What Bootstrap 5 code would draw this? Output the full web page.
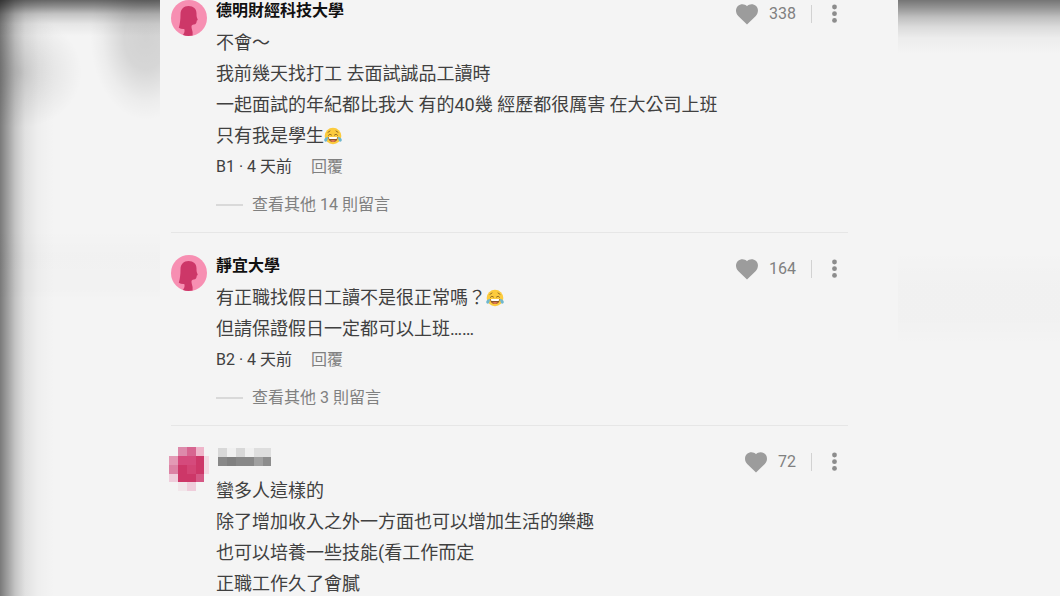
<!DOCTYPE html>
<html lang="zh-Hant">
<head>
<meta charset="utf-8">
<meta name="viewport" content="width=device-width, initial-scale=1">
<title>留言</title>
<link href="https://cdn.jsdelivr.net/npm/bootstrap@5.3.0/dist/css/bootstrap.min.css" rel="stylesheet">
<style>
  body { font-family: Roboto, "Noto Sans CJK TC", sans-serif; background: #f4f4f4; color: #404040; }
  .stage { display: grid; grid-template-columns: 160px minmax(0, 1fr) 162px; height: 100vh; overflow: hidden; }
  .shade-left {
    background:
      linear-gradient(to bottom, rgba(0,0,0,.58) 0, rgba(0,0,0,.43) 6px, rgba(0,0,0,.2) 14px, rgba(0,0,0,.06) 24px, transparent 36px),
      linear-gradient(to right, rgba(0,0,0,.5) 0, rgba(0,0,0,.36) 7px, rgba(0,0,0,.2) 15px, rgba(0,0,0,.08) 25px, rgba(0,0,0,.025) 38px, transparent 54px),
      radial-gradient(ellipse 56px 84px at 146px 36px, rgba(0,0,0,.14) 0, rgba(0,0,0,.12) 40%, rgba(0,0,0,.03) 78%, transparent 100%),
      radial-gradient(ellipse 62px 56px at 20px 72px, rgba(0,0,0,.12) 0, rgba(0,0,0,.06) 50%, transparent 100%),
      linear-gradient(to bottom, transparent 230px, rgba(0,0,0,.01) 255px, rgba(0,0,0,.008) 290px, transparent 300px),
      #f4f4f4;
  }
  .shade-right {
    background:
      linear-gradient(to bottom, rgba(0,0,0,.52) 0, rgba(0,0,0,.39) 8px, rgba(0,0,0,.22) 17px, rgba(0,0,0,.1) 27px, rgba(0,0,0,.03) 38px, transparent 54px),
      linear-gradient(to bottom, transparent 250px, rgba(0,0,0,.013) 285px, rgba(0,0,0,.01) 320px, transparent 345px),
      #f4f4f4;
  }
  /* the thread is scrolled a little past its first heading */
  .thread { margin-top: -22px; padding-left: 11px; padding-right: 50px; }
  .post { display: flex; gap: 9px; padding-top: 17px; padding-bottom: 12px; border-bottom: 1px solid #e6e6e6; }
  .face { width: 36px; height: 36px; margin-top: 5px; flex: none; overflow: visible; }
  .headline { height: 32px; padding-right: 5px; }
  .who { font-size: 16px; line-height: 31px; font-weight: 700; color: #111; margin: 0; }
  .who svg { display: block; margin-top: 5px; margin-left: 2px; }
  .words { font-size: 18px; line-height: 31px; margin: 0; }
  .emo { width: 18px; height: 18px; vertical-align: -3px; display: inline-block; }
  .meta { font-size: 16px; line-height: 31px; gap: 19px; }
  .plain { border: 0; background: none; padding: 0; color: #808080; line-height: 31px; font-size: 16px; }
  .more { gap: 9px; margin-top: 7px; }
  .more::before { content: ""; width: 27px; height: 2px; background: #d9d9d9; }
  .acts { height: 37px; }
  .like { gap: 10px; }
  .bar { width: 1px; height: 18px; background: #d2d2d2; margin-left: 15px; margin-right: 14px; }
  .dots svg, .like svg { display: block; }
</style>
</head>
<body>
<svg class="d-none" aria-hidden="true">
  <symbol id="heart" viewBox="0 0 24 22"><path fill="#9c9c9c" d="M12 21.500 3.200 13C.4 10 .3 5.600 2.900 3.100 5.600.5 9.700.7 12 3.200 14.300.7 18.400.5 21.100 3.100c2.600 2.500 2.500 6.900-.3 9.900Z"/></symbol>
  <symbol id="kebab" viewBox="0 0 17 20"><g fill="#8c8c8c"><circle cx="8.500" cy="3" r="2.400"/><circle cx="8.500" cy="9.700" r="2.400"/><circle cx="8.500" cy="16.400" r="2.400"/></g></symbol>
  <symbol id="girl" viewBox="0 0 36 36"><circle cx="18" cy="18" r="18" fill="#f78fb2"/><path fill="#cd3768" d="M9.500 14.500C9.500 9 12.800 6 17.500 6c4.900 0 8 2.800 8 7.500 0 2.300.1 3.700 1.100 5.700.3.700 0 1-.8 1.200-.2 2.600-1 3.900-3 4.100-1.700.2-2.400.9-2.300 2.500.1 1.900.8 3 1.100 5v3.500Q16.500 36.700 12 35c1.500-2.200 1.900-3.800 1.300-6-1.800.3-3.700-.1-5.500-1.300C9 24 9.500 19.500 9.500 14.500Z"/></symbol>
  <symbol id="joy" viewBox="0 0 18 18"><circle cx="9" cy="9" r="8.300" fill="#fccb3d"/><path d="M4 5.300 6 4M12 4l2 1.300M4.300 8.300Q5.800 6 7.600 8M10.400 8q1.800-2 3.300.3" fill="none" stroke="#8a6420" stroke-width=".9" stroke-linecap="round"/><path fill="#8a5528" d="M4.300 10h9.400c0 3-2 5-4.700 5s-4.700-2-4.700-5Z"/><path fill="#fff" d="M4.800 10h8.400l-.5 1.900H5.300Z"/><path fill="#e87856" d="M6 13.800Q9 12.300 12 13.800 9 16 6 13.800Z"/><path fill="#6fb7cf" d="M4 9.700C2 10 0 11.500.2 13.300c.2 1.800 2.300 1.700 3 .4.500-1.200.8-2.600.8-4ZM14 9.700c2 .3 4 1.800 3.800 3.600-.2 1.800-2.300 1.700-3 .4-.5-1.200-.8-2.600-.8-4Z"/></symbol>
</svg>
<div class="stage">
  <div class="shade-left"></div>
  <main>
    <div class="thread">
      <article class="post">
        <svg class="face" aria-hidden="true"><use href="#girl"/></svg>
        <div class="flex-grow-1">
          <div class="headline d-flex justify-content-between align-items-start">
            <h2 class="who">德明財經科技大學</h2>
            <div class="acts d-flex align-items-center">
              <button class="plain like d-flex align-items-center" aria-label="喜歡 338"><svg width="24" height="22"><use href="#heart"/></svg>338</button>
              <span class="bar"></span>
              <button class="plain dots" aria-label="更多選項"><svg width="17" height="20"><use href="#kebab"/></svg></button>
            </div>
          </div>
          <p class="words">不會～<br>我前幾天找打工 去面試誠品工讀時<br>一起面試的年紀都比我大 有的40幾 經歷都很厲害 在大公司上班<br>只有我是學生<svg class="emo" role="img" aria-label="笑哭"><use href="#joy"/></svg></p>
          <div class="meta d-flex"><span>B1 · 4 天前</span><button class="plain">回覆</button></div>
          <button class="plain more d-flex align-items-center">查看其他 14 則留言</button>
        </div>
      </article>
      <article class="post">
        <svg class="face" aria-hidden="true"><use href="#girl"/></svg>
        <div class="flex-grow-1">
          <div class="headline d-flex justify-content-between align-items-start">
            <h2 class="who">靜宜大學</h2>
            <div class="acts d-flex align-items-center">
              <button class="plain like d-flex align-items-center" aria-label="喜歡 164"><svg width="24" height="22"><use href="#heart"/></svg>164</button>
              <span class="bar"></span>
              <button class="plain dots" aria-label="更多選項"><svg width="17" height="20"><use href="#kebab"/></svg></button>
            </div>
          </div>
          <p class="words">有正職找假日工讀不是很正常嗎？<svg class="emo" role="img" aria-label="笑哭"><use href="#joy"/></svg><br>但請保證假日一定都可以上班……</p>
          <div class="meta d-flex"><span>B2 · 4 天前</span><button class="plain">回覆</button></div>
          <button class="plain more d-flex align-items-center">查看其他 3 則留言</button>
        </div>
      </article>
      <article class="post">
        <svg class="face" viewBox="0 1 36 36" aria-hidden="true" shape-rendering="crispEdges">
          <path fill="#dd8aab" d="M7 0h9v9H7z"/><path fill="#d76590" d="M16 0h9v9h-9z"/><path fill="#efb5ca" d="M25 0h8v9h-8z"/>
          <path fill="#e39ab5" d="M-2 9h9v9h-9z"/><path fill="#d54a7c" d="M7 9h18v9H7z"/><path fill="#cd3768" d="M25 9h8v18h-8zM7 18h9v17H7zM16 27h9v8h-9z"/><path fill="#f2d9e2" d="M33 9h5v18h-5z"/>
          <path fill="#dc82a4" d="M-2 18h9v9h-9z"/><path fill="#d34474" d="M16 18h9v9h-9z"/>
          <path fill="#efcddb" d="M-2 27h9v8h-9zM16 35h9v9h-9z"/><path fill="#d55885" d="M25 27h8v8h-8z"/><path fill="#f1e6ea" d="M7 35h9v9H7z"/>
        </svg>
        <div class="flex-grow-1">
          <div class="headline d-flex justify-content-between align-items-start">
            <h2 class="who" aria-label="匿名"><svg width="53" height="18" shape-rendering="crispEdges"><path fill="#d8d8d8" d="M0 0h9v9H0zM18 0h9v9h-9z"/><path fill="#f0f0f0" d="M9 0h9v9H9zM27 0h9v9h-9z"/><path fill="#dedede" d="M36 0h17v9H36z"/><path fill="#888" d="M0 9h36v9H0z"/><path fill="#808080" d="M9 9h9v9H9z"/><path fill="#a0a0a0" d="M36 9h9v9h-9z"/><path fill="#8d8d8d" d="M45 9h8v9h-8z"/></svg></h2>
            <div class="acts d-flex align-items-center">
              <button class="plain like d-flex align-items-center" aria-label="喜歡 72"><svg width="24" height="22"><use href="#heart"/></svg>72</button>
              <span class="bar"></span>
              <button class="plain dots" aria-label="更多選項"><svg width="17" height="20"><use href="#kebab"/></svg></button>
            </div>
          </div>
          <p class="words">蠻多人這樣的<br>除了增加收入之外一方面也可以增加生活的樂趣<br>也可以培養一些技能(看工作而定<br>正職工作久了會膩</p>
        </div>
      </article>
    </div>
  </main>
  <div class="shade-right"></div>
</div>
<script src="https://cdn.jsdelivr.net/npm/bootstrap@5.3.0/dist/js/bootstrap.bundle.min.js"></script>
</body>
</html>
